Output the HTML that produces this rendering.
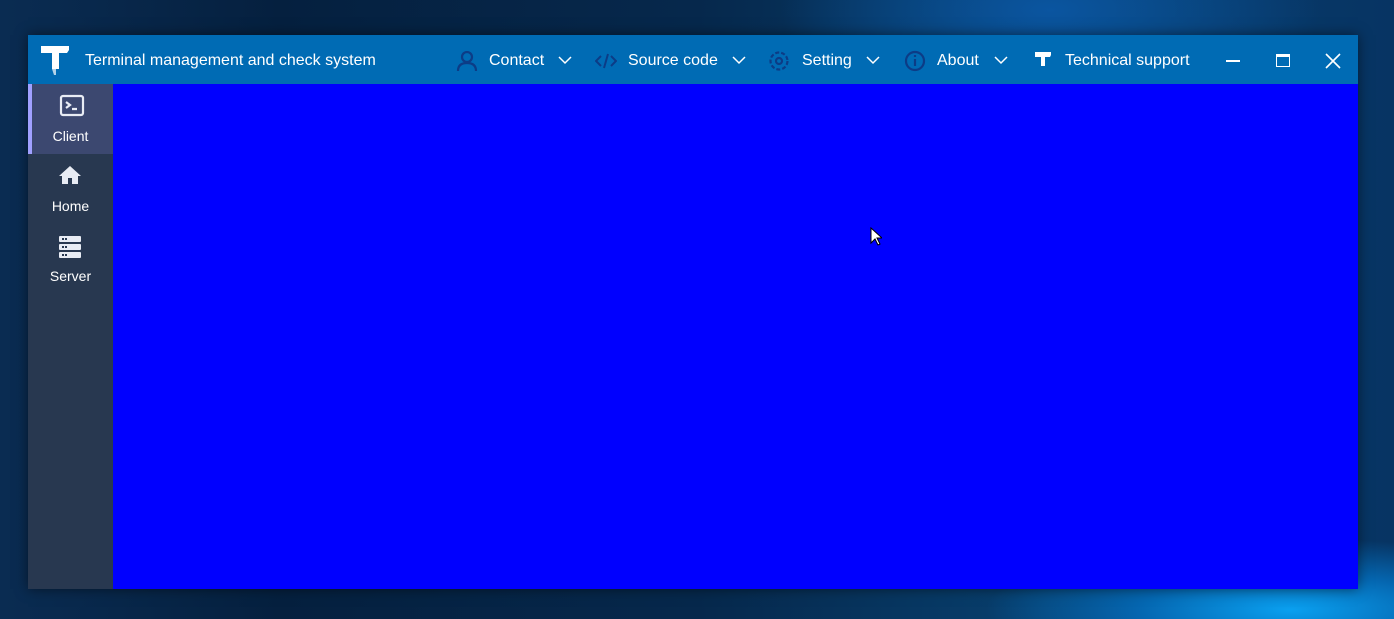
<!DOCTYPE html>
<html><head><meta charset="utf-8"><style>
*{margin:0;padding:0;box-sizing:border-box}
body{width:1394px;height:619px;overflow:hidden;position:relative;font-family:"Liberation Sans","Noto Sans CJK SC",sans-serif;
background:radial-gradient(ellipse 380px 90px at 1290px 610px,#0aa0f0 0%,#0566b0 40%,transparent 80%),radial-gradient(ellipse 300px 120px at 1050px 10px,#0a55a0 0%,transparent 90%),linear-gradient(90deg,#0a2c52 0%,#05203f 20%,#06284c 50%,#08406f 75%,#073463 100%);}
.win{position:absolute;left:28px;top:35px;width:1330px;height:554px;box-shadow:0 0 12px rgba(0,0,0,.5)}
.tb{position:absolute;left:0;top:0;width:1330px;height:49px;background:#006bb4;color:#fff;font-size:16px}
.tb span,.tb svg{position:absolute}
.tb span{top:17px}
.side{position:absolute;left:0;top:49px;width:85px;height:505px;background:#283850;color:#fff;font-size:14px}
.it{position:absolute;left:0;width:85px;height:70px;text-align:center}
.it svg{position:absolute;left:30px;top:10px}
.it span{position:absolute;left:0;width:85px;top:44px;text-align:center}
.main{position:absolute;left:85px;top:49px;width:1245px;height:505px;background:#0000ff}
</style></head><body>
<div class="win">
<div class="tb">
<svg style="left:12px;top:9px" width="30" height="32" viewBox="0 0 30 32"><path d="M1 2h28v4l-2 3H19v16h-7V9H1z" fill="#fff"/><path d="M12 25h4v6h-2z" fill="#fff" opacity=".7"/></svg>
<span style="left:57px">Terminal management and check system</span>
<svg style="left:428px;top:16px" width="22" height="20" viewBox="0 0 22 20" fill="none" stroke="#0c3c86" stroke-width="2.2"><circle cx="11" cy="6" r="5"/><path d="M2 20c0-6 4-8 9-8s9 2 9 8"/></svg>
<span style="left:461px">Contact</span>
<svg style="left:530px;top:21px" width="14" height="9" viewBox="0 0 14 9" fill="none" stroke="#fff" stroke-width="1.5"><path d="M1 1l6 6 6-6"/></svg>
<svg style="left:567px;top:18px" width="22" height="16" viewBox="0 0 22 16" fill="none" stroke="#0c3c86" stroke-width="2"><path d="M6 3L1 8l5 5M16 3l5 5-5 5M13 1L9 15"/></svg>
<span style="left:600px">Source code</span>
<svg style="left:704px;top:21px" width="14" height="9" viewBox="0 0 14 9" fill="none" stroke="#fff" stroke-width="1.5"><path d="M1 1l6 6 6-6"/></svg>
<svg style="left:740px;top:15px" width="22" height="22" viewBox="0 0 22 22" fill="none" stroke="#0c3c86" stroke-width="2.2"><circle cx="11" cy="11" r="8.5" stroke-dasharray="4 2"/><circle cx="11" cy="11" r="3"/></svg>
<span style="left:774px">Setting</span>
<svg style="left:838px;top:21px" width="14" height="9" viewBox="0 0 14 9" fill="none" stroke="#fff" stroke-width="1.5"><path d="M1 1l6 6 6-6"/></svg>
<svg style="left:876px;top:15px" width="22" height="22" viewBox="0 0 22 22" fill="none" stroke="#0c3c86" stroke-width="2.2"><circle cx="11" cy="11" r="9"/><path d="M11 9v7M11 5v2"/></svg>
<span style="left:909px">About</span>
<svg style="left:966px;top:21px" width="14" height="9" viewBox="0 0 14 9" fill="none" stroke="#fff" stroke-width="1.5"><path d="M1 1l6 6 6-6"/></svg>
<svg style="left:1006px;top:16px" width="18" height="20" viewBox="0 0 18 20"><path d="M1 1h16v3l-1 2h-5v9H7V6H1z" fill="#fff"/></svg>
<span style="left:1037px">Technical support</span>
<div style="position:absolute;left:1198px;top:25px;width:14px;height:2px;background:#fff"></div>
<div style="position:absolute;left:1248px;top:19px;width:14px;height:13px;border:1.5px solid #fff;border-top-width:3px"></div>
<svg style="left:1297px;top:18px" width="16" height="16" viewBox="0 0 16 16" stroke="#fff" stroke-width="1.6"><path d="M1 1l14 14M15 1L1 15"/></svg>
</div>
<div class="side">
<div class="it" style="top:0;background:#3c4870;border-left:4px solid #a0a0ff"><svg style="left:27px" width="26" height="24" viewBox="0 0 26 24" fill="none" stroke="#e8ecf4" stroke-width="2.2"><rect x="2" y="2" width="22" height="19" rx="2"/><path d="M7 8l4 3-4 3M13 15h5"/></svg><span style="left:-4px">Client</span></div>
<div class="it" style="top:70px"><svg width="24" height="22" viewBox="0 0 24 22"><path d="M12 2L1 12h3v8h6v-6h4v6h6v-8h3z" fill="#e8ecf4"/></svg><span>Home</span></div>
<div class="it" style="top:140px"><svg width="24" height="28" viewBox="0 0 24 28" fill="#e8ecf4"><rect x="1" y="2" width="22" height="6" rx="1"/><rect x="1" y="10" width="22" height="6" rx="1"/><rect x="1" y="18" width="22" height="6" rx="1"/><g fill="#283850"><rect x="4" y="4" width="2" height="2"/><rect x="7" y="4" width="2" height="2"/><rect x="4" y="12" width="2" height="2"/><rect x="7" y="12" width="2" height="2"/><rect x="4" y="20" width="2" height="2"/><rect x="7" y="20" width="2" height="2"/></g></svg><span>Server</span></div>
</div>
<div class="main"></div>
<svg style="position:absolute;left:842px;top:192px" width="12" height="19" viewBox="0 0 12 19"><path d="M1 1v15l4-4 3 6 2-1-3-6h5z" fill="#fff" stroke="#000" stroke-width="1"/></svg>
</div>
</body></html>
